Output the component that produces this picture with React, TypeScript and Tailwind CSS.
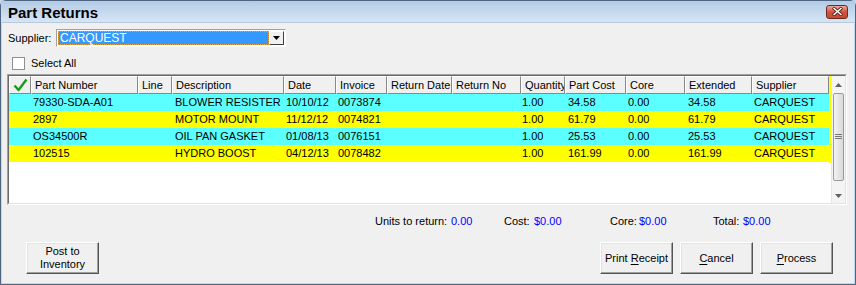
import React from 'react';

type Row = {
  part: string;
  desc: string;
  date: string;
  invoice: string;
  qty: string;
  cost: string;
  core: string;
  ext: string;
  supplier: string;
  bg: string;
};

const rows: Row[] = [
  { part: '79330-SDA-A01', desc: 'BLOWER RESISTER', date: '10/10/12', invoice: '0073874', qty: '1.00', cost: '34.58', core: '0.00', ext: '34.58', supplier: 'CARQUEST', bg: 'bg-[#5cffff]' },
  { part: '2897', desc: 'MOTOR MOUNT', date: '11/12/12', invoice: '0074821', qty: '1.00', cost: '61.79', core: '0.00', ext: '61.79', supplier: 'CARQUEST', bg: 'bg-[#ffff00]' },
  { part: 'OS34500R', desc: 'OIL PAN GASKET', date: '01/08/13', invoice: '0076151', qty: '1.00', cost: '25.53', core: '0.00', ext: '25.53', supplier: 'CARQUEST', bg: 'bg-[#5cffff]' },
  { part: '102515', desc: 'HYDRO BOOST', date: '04/12/13', invoice: '0078482', qty: '1.00', cost: '161.99', core: '0.00', ext: '161.99', supplier: 'CARQUEST', bg: 'bg-[#ffff00]' },
];

const cols = [
  { label: 'Part Number', w: 'w-[107px]' },
  { label: 'Line', w: 'w-[34px]' },
  { label: 'Description', w: 'w-[112px]' },
  { label: 'Date', w: 'w-[52px]' },
  { label: 'Invoice', w: 'w-[51px]' },
  { label: 'Return Date', w: 'w-[65px]' },
  { label: 'Return No', w: 'w-[69px]' },
  { label: 'Quantity', w: 'w-[44px]' },
  { label: 'Part Cost', w: 'w-[61px]' },
  { label: 'Core', w: 'w-[59px]' },
  { label: 'Extended', w: 'w-[67px]' },
  { label: 'Supplier', w: 'w-[77px]' },
];

const Btn: React.FC<{ className?: string; children: React.ReactNode }> = ({ className = '', children }) => (
  <div className={`w-[73px] h-[32px] border border-t-white border-l-white border-r-[#555] border-b-[#555] bg-[#f0f0f0] flex items-center justify-center text-center leading-[13px] shadow-[inset_-1px_-1px_0_#a0a0a0,inset_1px_1px_0_#e3e3e3] ${className}`}>
    <span>{children}</span>
  </div>
);

const Key: React.FC<{ children: React.ReactNode }> = ({ children }) => (
  <span className="underline underline-offset-2">{children}</span>
);

const App: React.FC = () => {
  return (
    <div className="w-[856px] h-[285px] overflow-hidden bg-[#c6d8ec] font-['Liberation_Sans',Arial,sans-serif] text-[11px] text-black">
      <div className="w-full h-full flex flex-col rounded-t-[6px] border border-[#4e6580] bg-[#c2d6ec]">
        {/* title bar */}
        <div className="h-[21px] flex items-center justify-between pl-[7px] pr-[7px] bg-gradient-to-b from-[#b3cbe6] to-[#d6e5f5]">
          <span className="font-bold text-[15px] leading-none mt-[1px]">Part Returns</span>
          <div className="w-[22px] h-[14px] rounded-[3px] border border-[#6b2a22] bg-gradient-to-b from-[#e9a99a] via-[#d0533d] to-[#c44a34] flex items-center justify-center">
            <svg width="11" height="9" viewBox="0 0 11 9">
              <path d="M1 0.5 L10 8.5 M10 0.5 L1 8.5" stroke="#5a1d14" strokeWidth="3.2" />
              <path d="M1.5 1 L9.5 8 M9.5 1 L1.5 8" stroke="#fff" strokeWidth="1.6" />
            </svg>
          </div>
        </div>

        {/* body */}
        <div className="flex-1 mx-[1px] mb-[1px] bg-[#f0f0f0] border-t border-[#b8c9dc] flex flex-col">
          {/* supplier */}
          <div className="flex items-center mt-[6px] h-[18px]">
            <span className="ml-[6px] w-[48px]">Supplier:</span>
            <div className="w-[230px] h-[18px] flex border border-t-[#a0a0a0] border-l-[#a0a0a0] border-r-white border-b-white bg-white p-[1px]">
              <div className="flex-1 bg-[#3399ff] border border-dotted border-[#e8a040] text-white flex items-center pl-[1px] text-[12px]">CARQUEST</div>
              <div className="w-[15px] border border-t-white border-l-white border-r-[#404040] border-b-[#404040] bg-[#f0f0f0] flex items-center justify-center">
                <svg width="7" height="4" viewBox="0 0 7 4"><path d="M0 0 H7 L3.5 4 Z" fill="#000" /></svg>
              </div>
            </div>
          </div>

          {/* select all */}
          <div className="flex items-center mt-[10px] h-[13px]">
            <div className="ml-[10px] w-[13px] h-[13px] border border-[#8f8f8f] bg-white" />
            <span className="ml-[6px]">Select All</span>
          </div>

          {/* grid */}
          <div className="ml-[5px] mt-[4px] w-[840px] h-[131px] border border-t-[#a0a0a0] border-l-[#a0a0a0] border-r-white border-b-white">
            <div className="w-full h-full border border-t-[#696969] border-l-[#696969] border-r-[#e3e3e3] border-b-[#e3e3e3] bg-white flex">
              <div className="w-[820px] flex flex-col">
                <div className="flex h-[18px] bg-[#f0f0f0]">
                  <div className="w-[22px] h-full border border-t-white border-l-white border-r-[#888] border-b-[#888] flex items-center justify-center">
                    <svg width="15" height="14" viewBox="0 0 15 14">
                      <path d="M1.5 7.5 L5.5 12 L13.5 1.5" fill="none" stroke="#1a9a1a" strokeWidth="2.4" strokeLinejoin="round" />
                    </svg>
                  </div>
                  {cols.map((c) => (
                    <div key={c.label} className={`${c.w} h-full border border-t-white border-l-white border-r-[#888] border-b-[#888] pl-[3px] flex items-center whitespace-nowrap overflow-hidden`}>
                      {c.label}
                    </div>
                  ))}
                </div>
                {rows.map((r) => (
                  <div key={r.part} className={`flex h-[17px] items-center ${r.bg} whitespace-nowrap`}>
                    <div className="w-[22px]" />
                    <div className="w-[107px] pl-[2px]">{r.part}</div>
                    <div className="w-[34px]" />
                    <div className="w-[112px] pl-[3px] overflow-hidden">{r.desc}</div>
                    <div className="w-[52px] pl-[2px]">{r.date}</div>
                    <div className="w-[51px] pl-[2px]">{r.invoice}</div>
                    <div className="w-[65px]" />
                    <div className="w-[69px]" />
                    <div className="w-[44px] pl-[1px]">{r.qty}</div>
                    <div className="w-[61px] pl-[3px]">{r.cost}</div>
                    <div className="w-[59px] pl-[2px]">{r.core}</div>
                    <div className="w-[67px] pl-[3px]">{r.ext}</div>
                    <div className="w-[77px] pl-[2px]">{r.supplier}</div>
                  </div>
                ))}
              </div>
              <div className="w-[2px] bg-[#ffff00] h-[87px]" />
              {/* scrollbar */}
              <div className="w-[16px] flex flex-col bg-[#f4f4f4] border-l border-[#e6e6e6]">
                <div className="h-[17px] flex items-center justify-center">
                  <svg width="7" height="4" viewBox="0 0 7 4"><path d="M0 4 H7 L3.5 0 Z" fill="#606060" /></svg>
                </div>
                <div className="mx-[1px] h-[88px] rounded-[2px] border border-[#9a9a9a] bg-gradient-to-r from-[#f2f2f2] to-[#d9d9d9] flex items-center justify-center">
                  <svg width="7" height="6" viewBox="0 0 7 6"><path d="M0 0.5 H7 M0 2.5 H7 M0 4.5 H7" stroke="#777" strokeWidth="1" /></svg>
                </div>
                <div className="flex-1 flex items-end justify-center pb-[5px]">
                  <svg width="7" height="4" viewBox="0 0 7 4"><path d="M0 0 H7 L3.5 4 Z" fill="#606060" /></svg>
                </div>
              </div>
            </div>
          </div>

          {/* totals */}
          <div className="flex items-center h-[14px] mt-[9px] whitespace-nowrap">
            <span className="ml-[373px] w-[76px]">Units to return:</span>
            <span className="w-[53px] text-[#0000ff]">0.00</span>
            <span className="w-[30px]">Cost:</span>
            <span className="w-[76px] text-[#0000ff]">$0.00</span>
            <span className="w-[29px]">Core:</span>
            <span className="w-[74px] text-[#0000ff]">$0.00</span>
            <span className="w-[30px]">Total:</span>
            <span className="text-[#0000ff]">$0.00</span>
          </div>

          {/* buttons */}
          <div className="flex mt-[14px]">
            <Btn className="ml-[24px]">Post to<br />Inventory</Btn>
            <div className="flex-1" />
            <div className="flex gap-[7px] mr-[21px]">
              <Btn>Print <Key>R</Key>eceipt</Btn>
              <Btn><Key>C</Key>ancel</Btn>
              <Btn><Key>P</Key>rocess</Btn>
            </div>
          </div>
        </div>
      </div>
    </div>
  );
};

export default App;
